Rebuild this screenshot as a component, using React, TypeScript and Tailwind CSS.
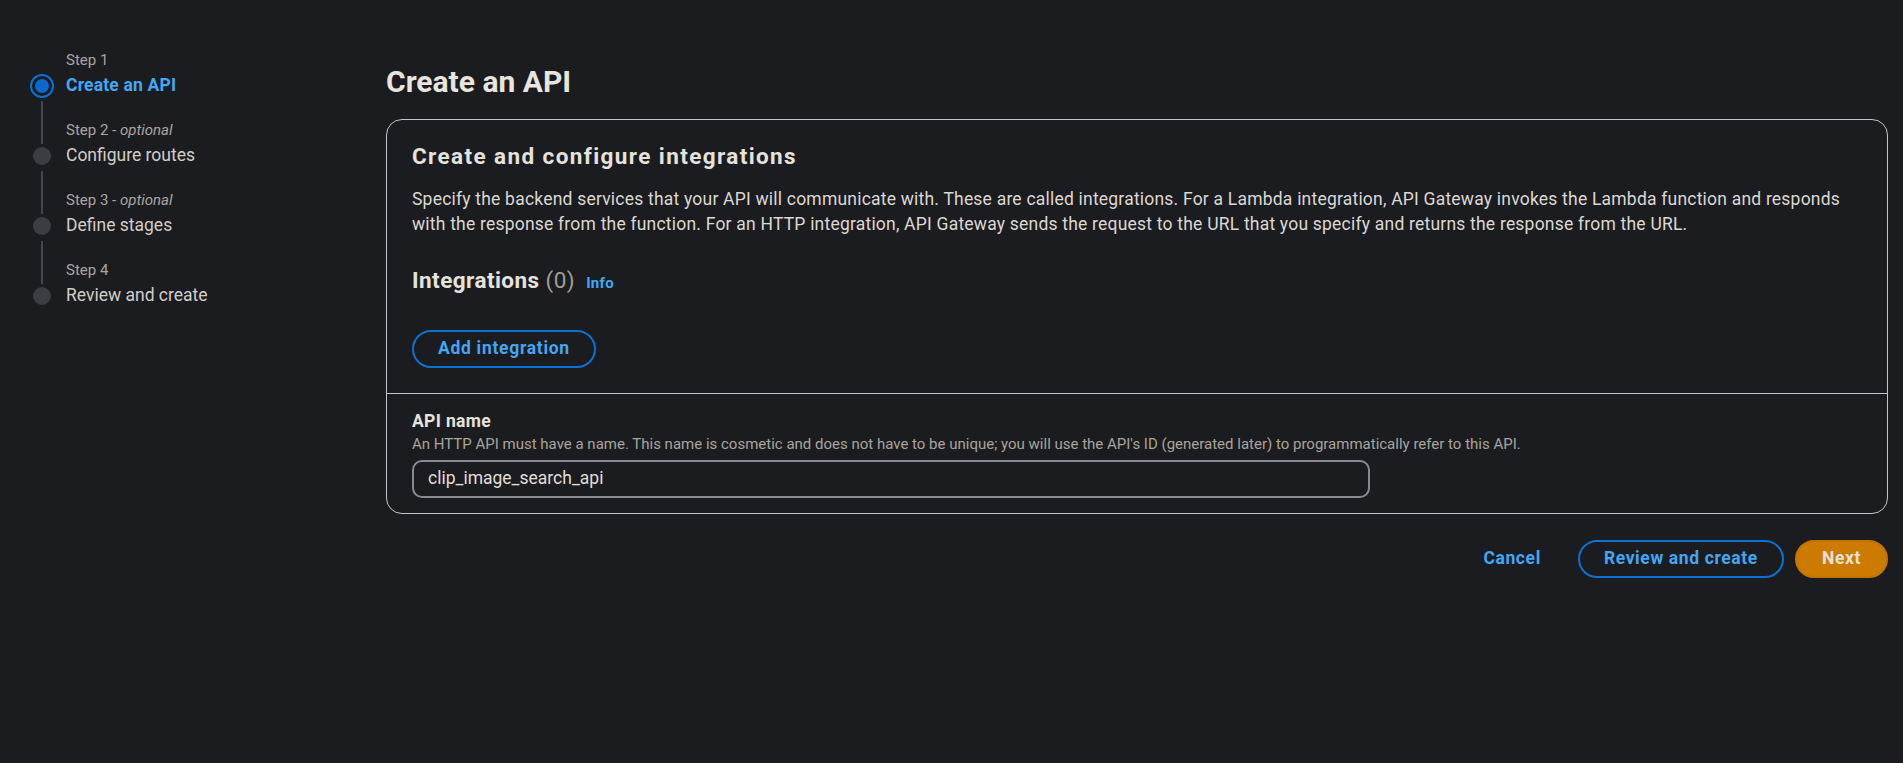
import React from "react";

type Step = { label: string; optional?: boolean; title: string; active?: boolean };

const steps: Step[] = [
  { label: "Step 1", title: "Create an API", active: true },
  { label: "Step 2", optional: true, title: "Configure routes" },
  { label: "Step 3", optional: true, title: "Define stages" },
  { label: "Step 4", title: "Review and create" },
];

function StepItem({ step, first, last }: { step: Step; first: boolean; last: boolean }) {
  return (
    <div className="flex gap-[12px]">
      <div className="flex w-[24px] shrink-0 flex-col items-center">
        <div className="flex h-[24px] w-full justify-center">
          {!first && <div className="h-full w-[2px] bg-[#414750]" />}
        </div>
        <div className="flex h-[24px] w-[24px] items-center justify-center">
          {step.active ? (
            <div className="flex h-[24px] w-[24px] items-center justify-center rounded-full border-[2.5px] border-[#0972d3]">
              <div className="h-[14px] w-[14px] rounded-full bg-[#0b68cf]" />
            </div>
          ) : (
            <div className="h-[18px] w-[18px] rounded-full bg-[#3a3e43]" />
          )}
        </div>
        <div className="flex w-full flex-1 justify-center pt-[3px]">
          {!last && <div className="h-full w-[2px] bg-[#414750]" />}
        </div>
      </div>
      <div className={last ? "" : "pb-[22px]"}>
        <div className="text-[15px] leading-[20px] text-[#aaa69f]">
          {step.label}
          {step.optional && (
            <>
              {" - "}
              <span className="italic">optional</span>
            </>
          )}
        </div>
        <div
          className={
            step.active
              ? "mt-[3px] text-[17.5px] font-bold leading-[25px] tracking-[0.01em] text-[#44a6f5]"
              : "mt-[3px] text-[17.5px] leading-[25px] text-[#d2cec8]"
          }
        >
          {step.title}
        </div>
      </div>
    </div>
  );
}

export default function App() {
  return (
    <div className="min-h-screen w-full bg-[#1b1c1f] font-['Roboto',sans-serif] text-[#dcd8d2]">
      <div className="flex">
        <aside className="w-[386px] shrink-0 pl-[30px] pt-[50px]">
          {steps.map((s, i) => (
            <StepItem key={s.label} step={s} first={i === 0} last={i === steps.length - 1} />
          ))}
        </aside>
        <main className="min-w-0 flex-1 pr-[15px] pt-[63px]">
          <h1 className="text-[30px] font-bold leading-[37px] text-[#e8e4de]">Create an API</h1>
          <div className="mt-[19px] rounded-[16px] border border-[#c4c4cc]">
            <div className="px-[25px] pb-[25px] pt-[22px]">
              <h2 className="text-[22.5px] font-bold leading-[28px] tracking-[0.062em] text-[#e6e2dc]">
                Create and configure integrations
              </h2>
              <p className="mt-[17px] text-[17.5px] leading-[25px] tracking-[0.012em] text-[#dcd8d2]">
                Specify the backend services that your API will communicate with. These are called integrations. For a
                Lambda integration, API Gateway invokes the Lambda function and responds
                <br />
                with the response from the function. For an HTTP integration, API Gateway sends the request to the URL
                that you specify and returns the response from the URL.
              </p>
              <div className="mt-[29px] flex items-baseline">
                <h3 className="text-[22.5px] font-bold leading-[28px] tracking-[0.02em] text-[#e6e2dc]">
                  Integrations <span className="font-normal text-[#a39d96]">(0)</span>
                </h3>
                <span className="ml-[11px] text-[15px] font-bold tracking-[0.02em] text-[#44a6f5]">Info</span>
              </div>
              <button className="mt-[35px] flex h-[38px] items-center rounded-full border-[2.5px] border-[#0972d3] px-[24px] text-[17.5px] font-bold leading-none tracking-[0.04em] text-[#44a6f5]">
                Add integration
              </button>
            </div>
            <div className="border-t border-[#c4c4cc] px-[25px] pb-[15px] pt-[15px]">
              <div className="text-[17.5px] font-bold leading-[25px] tracking-[0.02em] text-[#e6e2dc]">API name</div>
              <div className="text-[15px] leading-[20px] text-[#a8a49e]">
                An HTTP API must have a name. This name is cosmetic and does not have to be unique; you will use the
                API's ID (generated later) to programmatically refer to this API.
              </div>
              <div className="mt-[6px] flex h-[38px] w-[958px] items-center rounded-[10px] border-2 border-[#8a8a92] px-[14px] text-[17.5px] text-[#e2ded8]">
                clip_image_search_api
              </div>
            </div>
          </div>
          <div className="mt-[26px] flex justify-end gap-[11px]">
            <button className="flex h-[38px] items-center rounded-full px-[26px] text-[17.5px] font-bold leading-none tracking-[0.035em] text-[#44a6f5]">
              Cancel
            </button>
            <button className="flex h-[38px] items-center rounded-full border-[2.5px] border-[#0972d3] px-[24px] text-[17.5px] font-bold leading-none tracking-[0.035em] text-[#44a6f5]">
              Review and create
            </button>
            <button className="flex h-[38px] items-center rounded-full border-2 border-[#c27400] bg-[#cc7a00] px-[25px] text-[17.5px] font-bold leading-none tracking-[0.035em] text-[#e6e0d7]">
              Next
            </button>
          </div>
        </main>
      </div>
    </div>
  );
}
